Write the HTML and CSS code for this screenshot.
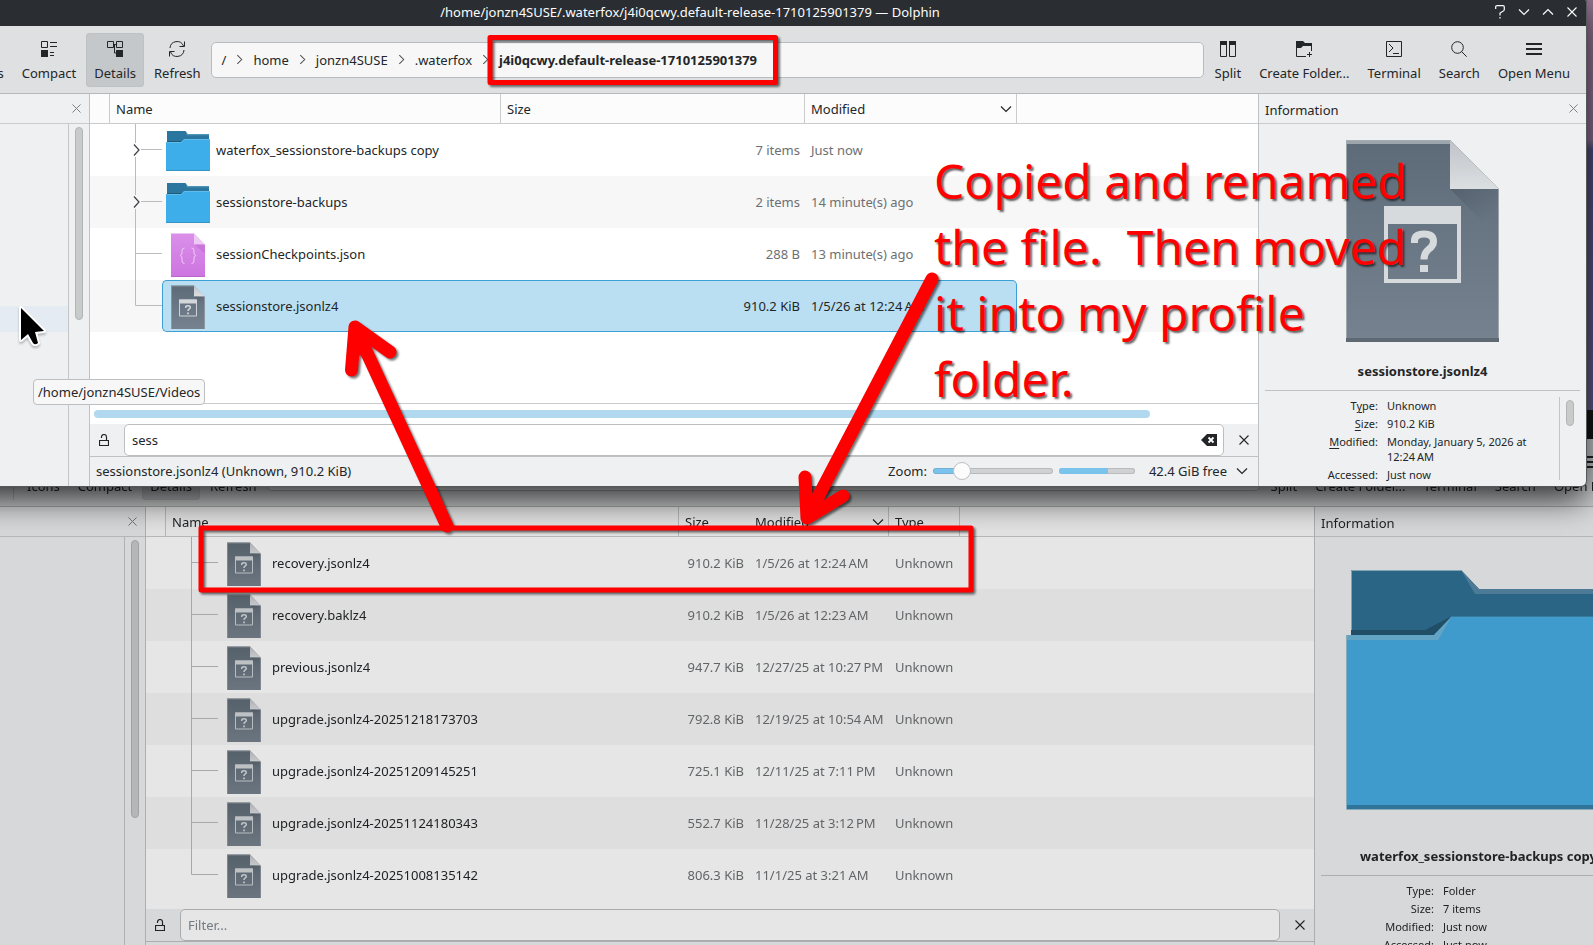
FILE: index.html
```html
<!DOCTYPE html>
<html lang="en">
<head>
<meta charset="utf-8">
<title>Dolphin</title>
<link rel="stylesheet" href="styles.css">
</head>
<body>
<svg class="sprite" width="0" height="0" aria-hidden="true">
  <defs>
    <linearGradient id="slate" x1="0" y1="0" x2="0" y2="1"><stop offset="0" stop-color="#5d6b78"/><stop offset="1" stop-color="#76828f"/></linearGradient>
    <linearGradient id="violet" x1="0" y1="0" x2="0" y2="1"><stop offset="0" stop-color="#da90e9"/><stop offset="1" stop-color="#cd74e0"/></linearGradient>
    <linearGradient id="fold" x1="0" y1="0" x2="0" y2="1"><stop offset="0" stop-color="#bfc3c7"/><stop offset="1" stop-color="#dcdfe2"/></linearGradient>
    <linearGradient id="foldshade" x1="0" y1="0" x2="1" y2="1"><stop offset="0" stop-color="#4c5864" stop-opacity=".6"/><stop offset=".7" stop-color="#4c5864" stop-opacity="0"/></linearGradient>
  </defs>
  <symbol id="i-compact" viewBox="0 0 16 16"><path d="M.5.5h6v6h-6zM9 1.5h7M9 5.5h7M9 11.5h4M9 14.5h4" fill="none" stroke="currentColor"/><path d="M0 9h7v7H0z" fill="currentColor"/></symbol>
  <symbol id="i-icons" viewBox="0 0 16 16"><path d="M.5.5h6v6h-6zM9.500.5h6v6h-6zM9.500 9.500h6v6h-6z" fill="none" stroke="currentColor"/><path d="M0 9h7v7H0z" fill="currentColor"/></symbol>
  <symbol id="i-details" viewBox="0 0 16 16"><path d="M.5.5h6v6h-6zM9.500.5h6v6h-6zM7 3.500h2M7.500 3.500v8.500H9" fill="none" stroke="currentColor"/><path d="M9 9h7v7H9z" fill="currentColor"/></symbol>
  <symbol id="i-refresh" viewBox="0 0 16 16"><path d="M1 7a7 7 0 0 1 13.500-2M15 9a7 7 0 0 1-13.500 2M15.500.5v5h-5M.5 15.500v-5h5" fill="none" stroke="currentColor"/></symbol>
  <symbol id="i-split" viewBox="0 0 16 16"><path d="M.5.5h6v15h-6zM9.500.5h6v15h-6z" fill="none" stroke="currentColor"/><path d="M0 0h7v4H0zM9 0h7v4H9z" fill="currentColor"/></symbol>
  <symbol id="i-newfolder" viewBox="0 0 16 16"><path d="M.5 5v10.500H10M15.500 3v7M13.500 11v5M11 13.500h5" fill="none" stroke="currentColor"/><path d="M0 0h7l2 2h7v3H7L5 7H0z" fill="currentColor"/></symbol>
  <symbol id="i-terminal" viewBox="0 0 16 16"><path d="M.5.5h15v15H.5zM3 3l4 4-4 4M7 12.500h6" fill="none" stroke="currentColor"/></symbol>
  <symbol id="i-search" viewBox="0 0 16 16"><circle cx="6.500" cy="6.500" r="5.800" fill="none" stroke="currentColor"/><path d="M10.500 10.500l5.200 5.200" stroke="currentColor"/></symbol>
  <symbol id="i-menu" viewBox="0 0 16 16"><path d="M0 3h16M0 8h16M0 13h16" stroke="currentColor" stroke-width="2"/></symbol>
  <symbol id="i-close" viewBox="0 0 10 10"><path d="M.5.5l9 9M9.500.5l-9 9" stroke="currentColor" stroke-width="1.100"/></symbol>
  <symbol id="i-down" viewBox="0 0 12 8"><path d="M1 1.500l5 5 5-5" fill="none" stroke="currentColor" stroke-width="1.200"/></symbol>
  <symbol id="i-up" viewBox="0 0 12 8"><path d="M1 6.500l5-5 5 5" fill="none" stroke="currentColor" stroke-width="1.200"/></symbol>
  <symbol id="i-right" viewBox="0 0 8 12"><path d="M1.500 1l5 5-5 5" fill="none" stroke="currentColor" stroke-width="1.200"/></symbol>
  <symbol id="i-help" viewBox="0 0 10 14"><path d="M.7 4V1.500Q.7.7 2 .7h6q1.300 0 1.300 1.300v2.500Q9.300 6 7.500 6.500L5 8v2.500M5 12v1.500" fill="none" stroke="currentColor" stroke-width="1.200"/></symbol>
  <symbol id="i-lock" viewBox="0 0 10 12"><path d="M.5 6.500h9v5h-9zM2.500 4V3a2.500 2.500 0 0 1 5 0v3.500" fill="none" stroke="currentColor" stroke-width="1.200"/></symbol>
  <symbol id="i-clear" viewBox="0 0 16 12"><path d="M0 6l6-6h10v12H6z" fill="currentColor"/><path d="M7.500 3.500l5 5M12.500 3.500l-5 5" stroke="#fff" stroke-width="1.800"/></symbol>
  <symbol id="i-folder" viewBox="0 0 48 48">
    <path d="M3 5h18.500l2 3H45v10H3z" fill="#2a769e"/><path d="M22 5.500l1.700 2.800H45v1H23z" fill="#5c9dbd"/>
    <path d="M3 15h14l4-2v3H3z" fill="#1f5a79"/>
    <path d="M2 16h15l3-3h26v32H2z" fill="#3daee9"/><path d="M2 16.500h15.300l2.900-3H46" fill="none" stroke="#5fbcec"/><path d="M2 44.500h44" stroke="#3793c6"/>
  </symbol>
  <symbol id="i-unknown" viewBox="0 0 48 48">
    <path d="M7 3.500h23L41 15v32H7z" fill="url(#slate)"/><path d="M30 3.500L41 14.500H30z" fill="url(#fold)"/>
    <path d="M30 14.500h11v9z" fill="url(#foldshade)"/><path d="M7.500 47V4H30M40.500 15v32" fill="none" stroke="#9aa3ab" stroke-opacity=".7"/>
    <path d="M15.500 18h17v16h-17z" fill="none" stroke="#ced2d6"/><path d="M15 17.500h18v4H15z" fill="#d3d7da"/>
    <path d="M21.700 26v-.8q0-1.500 2.300-1.500t2.300 1.700q0 1-1.300 1.700-1 .6-1 2" fill="none" stroke="#d7dadd" stroke-width="1.500"/><path d="M23.200 30.500h1.700v1.700h-1.700z" fill="#d7dadd"/>
  </symbol>
  <symbol id="i-json" viewBox="0 0 48 48">
    <path d="M7 3.500h23L41 15v32H7z" fill="url(#violet)"/><path d="M30 3.500L41 14.500H30z" fill="#efc9f6"/><path d="M30 14.500h11v9z" fill="#bb66cf" opacity=".5"/>
    <path d="M7 46.500h34" stroke="#b766c9"/>
    <path d="M20.500 18q-2.500 0-2.500 2.500v2.500q0 2-2 2.500 2 .5 2 2.500v3q0 2.500 2.500 2.500M27.500 18q2.500 0 2.500 2.500v2.500q0 2 2 2.500-2 .5-2 2.500v3q0 2.500-2.500 2.500" fill="none" stroke="#f1d3f7" stroke-width=".9"/>
  </symbol>
  <symbol id="t-branch" viewBox="0 0 52 52"><path d="M25.500 0v52M25 25.500h27" stroke="#b9bbbd"/></symbol>
  <symbol id="t-last" viewBox="0 0 52 52"><path d="M25.500 0v25.500H52" fill="none" stroke="#b9bbbd"/></symbol>
  <symbol id="t-folder" viewBox="0 0 52 52"><path d="M25.500 0v19M25.500 33v19M31 25.500h21" stroke="#b9bbbd"/><path d="M24 20.500l5 5.500-5 5.500" fill="none" stroke="#3a3e42" stroke-width="1.200"/></symbol>
</svg>

<section class="window window-back" aria-label="Background file manager window">
  <header class="titlebar"></header>
  <nav class="toolbar">
    <span class="sep"></span>
    <button class="tool"><svg class="i16"><use href="#i-icons"/></svg>Icons</button>
    <button class="tool"><svg class="i16"><use href="#i-compact"/></svg>Compact</button>
    <button class="tool active"><svg class="i16"><use href="#i-details"/></svg>Details</button>
    <button class="tool"><svg class="i16"><use href="#i-refresh"/></svg>Refresh</button>
    <div class="path"></div>
    <button class="tool"><svg class="i16"><use href="#i-split"/></svg>Split</button>
    <button class="tool"><svg class="i16"><use href="#i-newfolder"/></svg>Create Folder...</button>
    <button class="tool"><svg class="i16"><use href="#i-terminal"/></svg>Terminal</button>
    <button class="tool"><svg class="i16"><use href="#i-search"/></svg>Search</button>
    <button class="tool"><svg class="i16"><use href="#i-menu"/></svg>Open Menu</button>
  </nav>
  <div class="body">
    <aside class="places">
      <div class="panel-head"><button class="x" aria-label="Close places"><svg><use href="#i-close"/></svg></button></div>
      <div class="places-body"><div class="places-list"></div><div class="vscroll"><div class="vthumb tall"></div></div></div>
    </aside>
    <main class="view">
      <div class="list">
        <table class="files">
          <colgroup><col class="c-lead"><col class="c-name wide"><col class="c-size slim"><col class="c-mod slim"><col class="c-type"><col></colgroup>
          <thead><tr><th></th><th>Name</th><th class="open">Size</th><th class="sorted"><span class="sort">Modified<svg><use href="#i-down"/></svg></span></th><th>Type</th><th class="open"></th></tr></thead>
          <tbody>
            <tr><td></td><td><div class="cell"><svg class="tree"><use href="#t-branch"/></svg><div class="item"><svg class="i48"><use href="#i-unknown"/></svg>recovery.jsonlz4</div></div></td><td class="num">910.2 KiB</td><td>1/5/26 at 12:24&#8239;AM</td><td>Unknown</td><td></td></tr>
            <tr><td></td><td><div class="cell"><svg class="tree"><use href="#t-branch"/></svg><div class="item"><svg class="i48"><use href="#i-unknown"/></svg>recovery.baklz4</div></div></td><td class="num">910.2 KiB</td><td>1/5/26 at 12:23&#8239;AM</td><td>Unknown</td><td></td></tr>
            <tr><td></td><td><div class="cell"><svg class="tree"><use href="#t-branch"/></svg><div class="item"><svg class="i48"><use href="#i-unknown"/></svg>previous.jsonlz4</div></div></td><td class="num">947.7 KiB</td><td>12/27/25 at 10:27&#8239;PM</td><td>Unknown</td><td></td></tr>
            <tr><td></td><td><div class="cell"><svg class="tree"><use href="#t-branch"/></svg><div class="item"><svg class="i48"><use href="#i-unknown"/></svg>upgrade.jsonlz4-20251218173703</div></div></td><td class="num">792.8 KiB</td><td>12/19/25 at 10:54&#8239;AM</td><td>Unknown</td><td></td></tr>
            <tr><td></td><td><div class="cell"><svg class="tree"><use href="#t-branch"/></svg><div class="item"><svg class="i48"><use href="#i-unknown"/></svg>upgrade.jsonlz4-20251209145251</div></div></td><td class="num">725.1 KiB</td><td>12/11/25 at 7:11&#8239;PM</td><td>Unknown</td><td></td></tr>
            <tr><td></td><td><div class="cell"><svg class="tree"><use href="#t-branch"/></svg><div class="item"><svg class="i48"><use href="#i-unknown"/></svg>upgrade.jsonlz4-20251124180343</div></div></td><td class="num">552.7 KiB</td><td>11/28/25 at 3:12&#8239;PM</td><td>Unknown</td><td></td></tr>
            <tr><td></td><td><div class="cell"><svg class="tree"><use href="#t-last"/></svg><div class="item"><svg class="i48"><use href="#i-unknown"/></svg>upgrade.jsonlz4-20251008135142</div></div></td><td class="num">806.3 KiB</td><td>11/1/25 at 3:21&#8239;AM</td><td>Unknown</td><td></td></tr>
          </tbody>
        </table>
      </div>
      <div class="filter">
        <button class="fbtn" aria-label="Keep filter"><svg class="lock"><use href="#i-lock"/></svg></button>
        <div class="field"><input type="text" placeholder="Filter..." aria-label="Filter"></div>
        <button class="fbtn" aria-label="Hide filter"><svg class="cross"><use href="#i-close"/></svg></button>
      </div>
      <footer class="status"></footer>
    </main>
    <aside class="info">
      <div class="panel-head"><h2>Information</h2><button class="x" aria-label="Close information"><svg><use href="#i-close"/></svg></button></div>
      <div class="preview">
        <svg width="266" height="240" viewBox="0 0 266 240">
          <path d="M5 0h110l18 19h129v60H5z" fill="#2a729a"/>
          <path d="M115 0l18 19h129v5H129z" fill="#5189a8"/><path d="M5.500 66V.5H115" fill="none" stroke="#8db6c8"/>
          <path d="M5 60h74l27-14v20H5z" fill="#205876"/>
          <path d="M0 65h88l18-19h160v193H0z" fill="#3daeea"/>
          <path d="M0 65h88l18-19-14 24H0z" fill="#68b6de"/><path d="M106 46.500h160" stroke="#3888b5"/>
          <path d="M0 235h266v4H0z" fill="#2f82b1"/><path d="M.5 65v174.500H266" fill="none" stroke="#94bfd4"/>
        </svg>
      </div>
      <h3>waterfox_sessionstore-backups copy</h3>
      <div class="meta">
        <dl><dt>Type:</dt><dd>Folder</dd><dt>Size:</dt><dd>7 items</dd><dt>Modified:</dt><dd>Just now</dd><dt>Accessed:</dt><dd>Just now</dd></dl>
      </div>
    </aside>
  </div>
</section>

<section class="window window-front" aria-label="Active file manager window">
  <header class="titlebar">
    <span class="title">/home/jonzn4SUSE/.waterfox/j4i0qcwy.default-release-1710125901379 — Dolphin</span>
    <div class="wm">
      <button aria-label="Help"><svg class="help"><use href="#i-help"/></svg></button>
      <button aria-label="Minimize"><svg class="chev"><use href="#i-down"/></svg></button>
      <button aria-label="Maximize"><svg class="chev"><use href="#i-up"/></svg></button>
      <button aria-label="Close"><svg class="cross"><use href="#i-close"/></svg></button>
    </div>
  </header>
  <nav class="toolbar">
    <span class="sep"></span>
    <button class="tool"><svg class="i16"><use href="#i-icons"/></svg>Icons</button>
    <button class="tool"><svg class="i16"><use href="#i-compact"/></svg>Compact</button>
    <button class="tool active"><svg class="i16"><use href="#i-details"/></svg>Details</button>
    <button class="tool"><svg class="i16"><use href="#i-refresh"/></svg>Refresh</button>
    <div class="path">
      <a href="#">/</a><svg><use href="#i-right"/></svg>
      <a href="#">home</a><svg><use href="#i-right"/></svg>
      <a href="#">jonzn4SUSE</a><svg><use href="#i-right"/></svg>
      <a href="#">.waterfox</a><svg><use href="#i-right"/></svg>
      <a href="#" class="here">j4i0qcwy.default-release-1710125901379</a>
    </div>
    <button class="tool"><svg class="i16"><use href="#i-split"/></svg>Split</button>
    <button class="tool"><svg class="i16"><use href="#i-newfolder"/></svg>Create Folder...</button>
    <button class="tool"><svg class="i16"><use href="#i-terminal"/></svg>Terminal</button>
    <button class="tool"><svg class="i16"><use href="#i-search"/></svg>Search</button>
    <button class="tool"><svg class="i16"><use href="#i-menu"/></svg>Open Menu</button>
  </nav>
  <div class="body">
    <aside class="places">
      <div class="panel-head"><button class="x" aria-label="Close places"><svg><use href="#i-close"/></svg></button></div>
      <div class="places-body"><div class="places-list"><div class="hovered"></div></div><div class="vscroll"><div class="vthumb"></div></div></div>
    </aside>
    <main class="view">
      <div class="list roomy">
        <table class="files">
          <colgroup><col class="c-lead"><col class="c-name"><col class="c-size"><col class="c-mod"><col></colgroup>
          <thead><tr><th></th><th>Name</th><th>Size</th><th class="sorted"><span class="sort">Modified<svg><use href="#i-down"/></svg></span></th><th class="open"></th></tr></thead>
          <tbody>
            <tr><td></td><td><div class="cell"><svg class="tree"><use href="#t-folder"/></svg><div class="item"><svg class="i48"><use href="#i-folder"/></svg>waterfox_sessionstore-backups copy</div></div></td><td class="num">7 items</td><td>Just now</td><td></td></tr>
            <tr><td></td><td><div class="cell"><svg class="tree"><use href="#t-folder"/></svg><div class="item"><svg class="i48"><use href="#i-folder"/></svg>sessionstore-backups</div></div></td><td class="num">2 items</td><td>14 minute(s) ago</td><td></td></tr>
            <tr><td></td><td><div class="cell"><svg class="tree"><use href="#t-branch"/></svg><div class="item"><svg class="i48"><use href="#i-json"/></svg>sessionCheckpoints.json</div></div></td><td class="num">288 B</td><td>13 minute(s) ago</td><td></td></tr>
            <tr class="selected"><td></td><td><div class="cell"><svg class="tree"><use href="#t-last"/></svg><div class="item"><svg class="i48"><use href="#i-unknown"/></svg>sessionstore.jsonlz4</div></div></td><td class="num">910.2 KiB</td><td class="end">1/5/26 at 12:24&#8239;AM</td><td></td></tr>
          </tbody>
        </table>
      </div>
      <div class="hscroll"><div class="hthumb"></div></div>
      <div class="filter">
        <button class="fbtn" aria-label="Keep filter"><svg class="lock"><use href="#i-lock"/></svg></button>
        <div class="field"><input type="text" value="sess" aria-label="Filter"><button aria-label="Clear"><svg class="clear"><use href="#i-clear"/></svg></button></div>
        <button class="fbtn" aria-label="Hide filter"><svg class="cross"><use href="#i-close"/></svg></button>
      </div>
      <footer class="status">
        <span class="summary">sessionstore.jsonlz4 (Unknown, 910.2 KiB)</span>
        <label for="zoom">Zoom:</label>
        <input id="zoom" type="range" min="0" max="10" value="2">
        <progress max="100" value="65" aria-label="Disk usage"></progress>
        <button class="free">42.4 GiB free<svg class="chev"><use href="#i-down"/></svg></button>
      </footer>
    </main>
    <aside class="info">
      <div class="panel-head"><h2>Information</h2><button class="x" aria-label="Close information"><svg><use href="#i-close"/></svg></button></div>
      <div class="preview">
        <svg width="153" height="202" viewBox="0 0 153 202">
          <path d="M0 0h104l49 49v153H0z" fill="url(#slate)"/><path d="M0 0h104v4H0z" fill="#9da5ad"/>
          <path d="M104 49h49v49z" fill="url(#foldshade)"/><path d="M104 0l49 49h-49z" fill="url(#fold)"/>
          <path d="M.5 202V.5H104M152.500 49v153" fill="none" stroke="#a9b0b7" stroke-opacity=".8"/><path d="M0 198h153v4H0z" fill="#5e6974"/>
          <path d="M38 66h77v77H38zM42 84v55h69V84z" fill="#d6dadd" fill-rule="evenodd"/>
          <path d="M68.500 103v-2q0-7 9.500-7t9.500 7.500q0 4.500-5 8-4.500 3.500-4.500 10" fill="none" stroke="#d6dadd" stroke-width="7"/><path d="M74 125h8v7h-8z" fill="#d6dadd"/>
        </svg>
      </div>
      <h3>sessionstore.jsonlz4</h3>
      <div class="meta">
        <dl><dt>T<u>y</u>pe:</dt><dd>Unknown</dd><dt><u>S</u>ize:</dt><dd>910.2 KiB</dd><dt><u>M</u>odified:</dt><dd>Monday, January 5, 2026 at 12:24&#8239;AM</dd><dt>Accessed:</dt><dd>Just now</dd></dl>
        <div class="mscroll"><div class="mthumb"></div></div>
      </div>
    </aside>
  </div>
</section>

<div class="tooltip" role="tooltip">/home/jonzn4SUSE/Videos</div>
<svg class="cursor" width="36" height="48" viewBox="0 0 36 48"><path d="M5 4v32l7-6 5 9q2 2.500 5 0l-3-11 9-1z" fill="#000" stroke="#fff" stroke-width="4" stroke-linejoin="round" paint-order="stroke"/></svg>

<svg class="marks" width="1000" height="620" viewBox="0 0 1000 620" fill="none" stroke="#f00" stroke-linejoin="round" stroke-linecap="round" aria-hidden="true">
  <path d="M490 37.500h285.500v45H490z" stroke-width="5"/>
  <path d="M201 528h770v62H201z" stroke-width="5"/>
  <path d="M447 526L355 327M351.500 370L355 327 390 352M355 327l5 22" stroke-width="13"/>
  <path d="M932 279L807 518M805 477L807 518 843 496" stroke-width="13"/>
</svg>
<p class="note">Copied and renamed
the file.  Then moved
it into my profile
folder.</p>
</body>
</html>
```

FILE: styles.css
```css
* { box-sizing: border-box; }

body {
  margin: 0;
  position: relative;
  min-height: 100vh;
  overflow: hidden;
  background: linear-gradient(#9a7594 0, #8a6c90 140px, #4d4c7c 150px, #62588a 420px);
  color: #232629;
  font: 13px/18px "Noto Sans", "Open Sans", sans-serif;
}

button, input { font: inherit; color: inherit; }
button { border: 0; padding: 0; background: none; display: inline-flex; align-items: center; justify-content: center; }
svg { flex: none; display: block; }
h2, h3, p, dl, dd { margin: 0; font: inherit; }
.sprite { position: absolute; }

/* Windows */
.window { position: absolute; display: flex; flex-direction: column; background: #eff0f1; overflow: hidden; }
.window-front { top: -3px; left: -206px; right: 7px; border-radius: 5px; box-shadow: 0 0 0 1px #55585a, 0 12px 34px rgba(0, 0, 0, .8); }
.window-back { top: 410px; left: -150px; right: -49px; bottom: -26px; filter: brightness(.9) saturate(.9); }

.titlebar { position: relative; height: 29px; display: flex; align-items: center; justify-content: center; background: #2a2e32; color: #fcfcfc; }
.window-back .titlebar { background: #16181a; }
.wm { position: absolute; right: 8px; top: 0; height: 100%; display: flex; gap: 12px; }
.wm button { width: 12px; }
.help { width: 10px; height: 14px; }
.chev { width: 12px; height: 8px; }
.cross { width: 10px; height: 10px; }

.toolbar { height: 68px; padding: 0 8px 0 163px; display: flex; align-items: center; gap: 2px; background: #dee0e2; border-bottom: 1px solid #b6b9bb; }
.sep { width: 1px; height: 54px; margin-right: 3px; background: #bfc1c3; }
.tool { flex: none; flex-direction: column; justify-content: flex-start; gap: 7px; height: 54px; padding: 8px 8px 0; border-radius: 4px; }
.tool.active { background: #c5c8ca; box-shadow: inset 0 0 0 1px #bfc2c4; }
.i16 { width: 16px; height: 16px; }
.path { flex: 1; height: 36px; margin-right: 1px; display: flex; align-items: center; gap: 10px; padding: 0 10px; background: #f7f7f7; border: 1px solid #b9bcbe; border-radius: 5px; }
.path a { color: inherit; text-decoration: none; }
.path svg { width: 7px; height: 11px; color: #4d5154; }
.path .here { font-weight: 700; }

.body { flex: 1; display: flex; min-height: 0; }
.panel-head { height: 30px; flex: none; display: flex; align-items: center; padding: 0 8px 0 6px; border-bottom: 1px solid #c9cbcd; }
.panel-head h2 { padding-top: 2px; }
.x { margin-left: auto; color: #7d8184; }
.x svg { width: 9px; height: 9px; }

/* Places */
.places { width: 296px; flex: none; display: flex; flex-direction: column; border-right: 1px solid #bfc1c3; }
.places-body { flex: 1; display: flex; }
.places-list { flex: 1; padding-top: 182px; }
.hovered { height: 26px; background: #e5ebf2; }
.vscroll { width: 21px; border-left: 1px solid #c3c5c7; padding: 3px 6px; }
.vthumb { height: 193px; background: #c9cbcb; border: 1px solid #b3b5b5; border-radius: 4px; }
.vthumb.tall { height: 278px; }

/* File list */
.view { flex: 1; min-width: 0; display: flex; flex-direction: column; }
.list { flex: 1; background: #fff; }
.list.roomy { padding-bottom: 71px; }
.files { width: 100%; table-layout: fixed; border-collapse: separate; border-spacing: 0; }
.c-lead { width: 20px; }
.c-name { width: 391px; }
.c-name.wide { width: 513px; }
.c-size { width: 304px; }
.c-size.slim { width: 70px; }
.c-mod { width: 212px; }
.c-mod.slim { width: 140px; }
.c-type { width: 71px; }
.files th { height: 30px; padding: 0 6px; text-align: left; font-weight: 400; background: #fcfcfc; border-right: 1px solid #c9cbcd; border-bottom: 1px solid #c9cbcd; }
.files th.open { border-right: 0; }
.files th.sorted { padding-right: 4px; }
.sort { display: flex; align-items: center; justify-content: space-between; }
.sort svg { width: 12px; height: 8px; }
.files td { height: 52px; padding: 0 6px; white-space: nowrap; color: #6d7073; }
.files td:nth-child(2) { padding: 0; color: #232629; }
.files tr:nth-child(even) td { background: #f7f7f7; }
.files td.num { text-align: right; padding-right: 5px; }
.cell { display: flex; height: 52px; }
.tree { width: 52px; height: 52px; }
.item { flex: 1; display: flex; align-items: center; gap: 4px; padding-left: 2px; }
.i48 { width: 48px; height: 48px; }
.files .selected td.num, .files .selected td.end, .selected .item { background: #badff3; border: solid #3c9fd5; border-width: 1px 0; color: #232629; }
.selected .item { border-left-width: 1px; border-radius: 5px 0 0 5px; padding-left: 1px; }
.files .selected td.end { border-right-width: 1px; border-radius: 0 5px 5px 0; }

.hscroll { height: 21px; padding: 6px 4px 7px; background: #fff; border-top: 1px solid #c9cbcd; }
.hthumb { width: 91%; height: 8px; border-radius: 4px; background: #b0d9f0; }

.filter { height: 33px; display: flex; gap: 6px; border-bottom: 1px solid #bfc1c3; }
.fbtn { width: 28px; height: 32px; flex: none; }
.lock { width: 10px; height: 12px; }
.field { flex: 1; height: 32px; display: flex; align-items: center; padding: 0 6px 0 7px; background: #fff; border: 1px solid #bcbec0; border-radius: 5px; }
.field input { flex: 1; min-width: 0; padding: 0; border: 0; background: none; outline: 0; }
.field input::placeholder { color: #7f8890; opacity: 1; }
.clear { width: 16px; height: 12px; }

.status { height: 29px; display: flex; align-items: center; gap: 6px; padding: 0 10px 1px 6px; }
.summary { margin-right: auto; }
#zoom { appearance: none; width: 120px; height: 18px; margin: 0; background: none; }
#zoom::-webkit-slider-runnable-track { height: 6px; border-radius: 3px; background: linear-gradient(90deg, #7ac3ec 24%, #d0d1d2 24%); box-shadow: inset 0 0 0 1px rgba(90, 100, 110, .2); }
#zoom::-webkit-slider-thumb { appearance: none; width: 18px; height: 18px; margin-top: -6px; border: 1px solid #bcbec0; border-radius: 50%; background: #fcfcfc; }
progress { appearance: none; width: 76px; height: 6px; }
progress::-webkit-progress-bar { background: #d0d1d2; border-radius: 3px; overflow: hidden; box-shadow: inset 0 0 0 1px #b9bbbd; }
progress::-webkit-progress-value { background: #7ac3ec; }
.free { gap: 9px; margin-left: 8px; }

/* Information */
.info { width: 328px; flex: none; display: flex; flex-direction: column; border-left: 1px solid #bfc1c3; }
.preview { flex: 1; display: flex; align-items: center; justify-content: center; }
.info h3 { margin: 0 6px; padding: 4px 0 10px; text-align: center; font-weight: 700; white-space: nowrap; border-bottom: 1px solid #bfc1c3; }
.meta { height: 95px; margin: 0 6px; padding: 6px 0; display: flex; overflow: hidden; font-size: 11px; line-height: 15px; }
.meta dl { flex: 1; display: grid; grid-template-columns: 113px 1fr; gap: 3px 9px; align-content: start; padding-top: 1px; }
.meta dt { text-align: right; }
.meta u { text-underline-offset: 2px; }
.mscroll { width: 21px; padding: 3px 6px; border-left: 1px solid #c3c5c7; }
.mthumb { height: 26px; background: #c9cbcb; border: 1px solid #b3b5b5; border-radius: 4px; }

/* Overlays */
.tooltip { position: absolute; left: 33px; top: 379px; padding: 3px 4px; background: #f7f7f7; border: 1px solid #bcbec0; border-radius: 4px; }
.cursor { position: absolute; left: 16px; top: 304px; filter: drop-shadow(0 2px 1px rgba(0, 0, 0, .25)); }
.marks { position: absolute; left: 0; top: 0; filter: drop-shadow(2px 2px 1px rgba(0, 0, 0, .55)); pointer-events: none; }
.note { position: absolute; left: 934px; top: 148px; font-size: 48px; line-height: 66px; color: #f00; white-space: pre; text-shadow: 2px 2px 2px rgba(0, 0, 0, .6); }
```
